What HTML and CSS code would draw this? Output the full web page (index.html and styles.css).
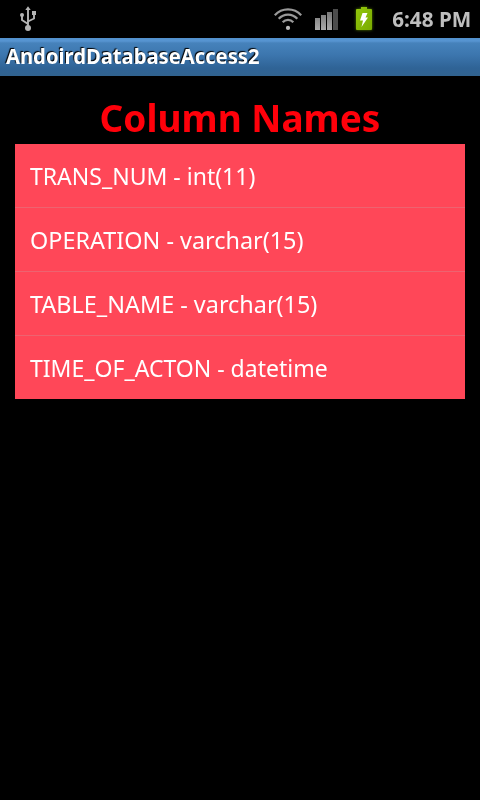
FILE: index.html
```html
<!DOCTYPE html>
<html lang="en">
<head>
<meta charset="utf-8">
<title>AndoirdDatabaseAccess2</title>
<link rel="stylesheet" href="styles.css">
</head>
<body>
<header class="status-bar">
  <svg class="usb" width="18" height="26" viewBox="0 0 18 26" fill="none" stroke="#b4b4b4" stroke-width="1.9">
    <path d="M9 3V21M9 18L3 14V9.500M9 15.500L15 12.500V8"/>
    <path d="M9 0.200L11.700 4H6.300Z" fill="#b4b4b4" stroke="none"/>
    <circle cx="3" cy="9" r="2" fill="#b4b4b4" stroke="none"/>
    <rect x="13" y="5" width="4" height="4" fill="#b4b4b4" stroke="none"/>
    <circle cx="9" cy="22" r="3" fill="#b4b4b4" stroke="none"/>
  </svg>
  <svg class="wifi" width="30" height="24" viewBox="0 0 30 24" fill="none" stroke="#999" stroke-width="2.2">
    <path d="M1.800 8.200C9 0.400 21 0.400 28.200 8.200"/>
    <path d="M5.700 11.800C10.800 6.200 19.200 6.200 24.300 11.800"/>
    <path d="M9.700 15.300C12.600 12 17.400 12 20.300 15.300"/>
    <circle cx="15" cy="20.900" r="2.100" fill="#bbb" stroke="none"/>
  </svg>
  <svg class="signal" width="24" height="22" viewBox="0 0 24 22">
    <defs><linearGradient id="bar" x1="0" y1="0" x2="0" y2="1"><stop offset="0" stop-color="#777"/><stop offset="1" stop-color="#aaa"/></linearGradient></defs>
    <path d="M0 10H5V22H0ZM6 7H11V22H6ZM12 4H17V22H12Z" fill="url(#bar)"/>
    <path d="M18 1H23V22H18Z" fill="#4c4c4c"/>
  </svg>
  <svg class="battery" width="24" height="30" viewBox="0 0 24 30">
    <defs><linearGradient id="cell" x1="0" y1="0" x2="1" y2="1"><stop offset="0" stop-color="#93c80c"/><stop offset="1" stop-color="#79aa00"/></linearGradient></defs>
    <path class="battery-cell" d="M9 3H15V5H19Q20 5 20 6V25Q20 26 19 26H5Q4 26 4 25V6Q4 5 5 5H9Z" fill="url(#cell)"/>
    <path d="M10.500 9H15.500L13.500 13.500H16L9.500 23L11 16.500H8Z" fill="#fff"/>
  </svg>
  <span class="clock">6:48 PM</span>
</header>
<div class="title-bar"><span class="title">AndoirdDatabaseAccess2</span></div>
<main class="content">
  <h1 class="heading">Column Names</h1>
  <ul class="columns">
    <li class="column"><span class="label narrow">TRANS_NUM - int(11)</span></li>
    <li class="column"><span class="label">OPERATION - varchar(15)</span></li>
    <li class="column"><span class="label">TABLE_NAME - varchar(15)</span></li>
    <li class="column"><span class="label narrow">TIME_OF_ACTON - datetime</span></li>
  </ul>
</main>
</body>
</html>
```
FILE: styles.css
```css
* { box-sizing: border-box; }
body {
  margin: 0;
  min-height: 800px;
  background: #000;
  font-family: "Noto Sans", "Open Sans", sans-serif;
}
svg { display: block; flex: none; }
.status-bar {
  display: flex;
  height: 38px;
  padding: 0 9px 0 19px;
}
.usb { margin-top: 6px; }
.wifi { margin: 7px 0 0 236px; }
.signal { margin: 8px 0 0 12px; }
.battery { margin: 4px 0 0 13px; }
.battery-cell { filter: drop-shadow(0 0 1.500px #568000); }
.clock {
  margin-left: auto;
  color: #bebebe;
  font-size: 21px;
  font-weight: 700;
  line-height: 39px;
  white-space: nowrap;
  transform: scaleX(0.985);
  transform-origin: right;
}
.title-bar {
  height: 38px;
  padding-left: 6px;
  background: linear-gradient(#5290cc 0, #5795d2 3px, #4682bb 5px, #3c76ae 17px, #2f6396 30px, #31638f 38px);
}
.title {
  display: inline-block;
  color: #fff;
  font-size: 21px;
  font-weight: 700;
  line-height: 37px;
  white-space: nowrap;
  text-shadow: -1px -1px 1px #000;
  transform: scaleX(0.962);
  transform-origin: left;
}
.content { padding: 16px 15px 0; }
.heading {
  margin: 0;
  height: 52px;
  color: #ff000a;
  font-size: 37.500px;
  line-height: 51px;
  text-align: center;
  white-space: nowrap;
  transform: scaleX(0.987);
}
.columns {
  margin: 0;
  padding: 0;
  height: 255px;
  overflow: hidden;
  list-style: none;
  background: #ff4758;
}
.column {
  height: 64px;
  padding-left: 15px;
  border-bottom: 1px solid #ed6370;
  color: #fff;
  font-size: 24px;
  line-height: 63px;
  white-space: nowrap;
}
.label {
  display: inline-block;
  transform: scaleX(0.975);
  transform-origin: left;
}
.narrow { transform: scaleX(0.959); }
```
